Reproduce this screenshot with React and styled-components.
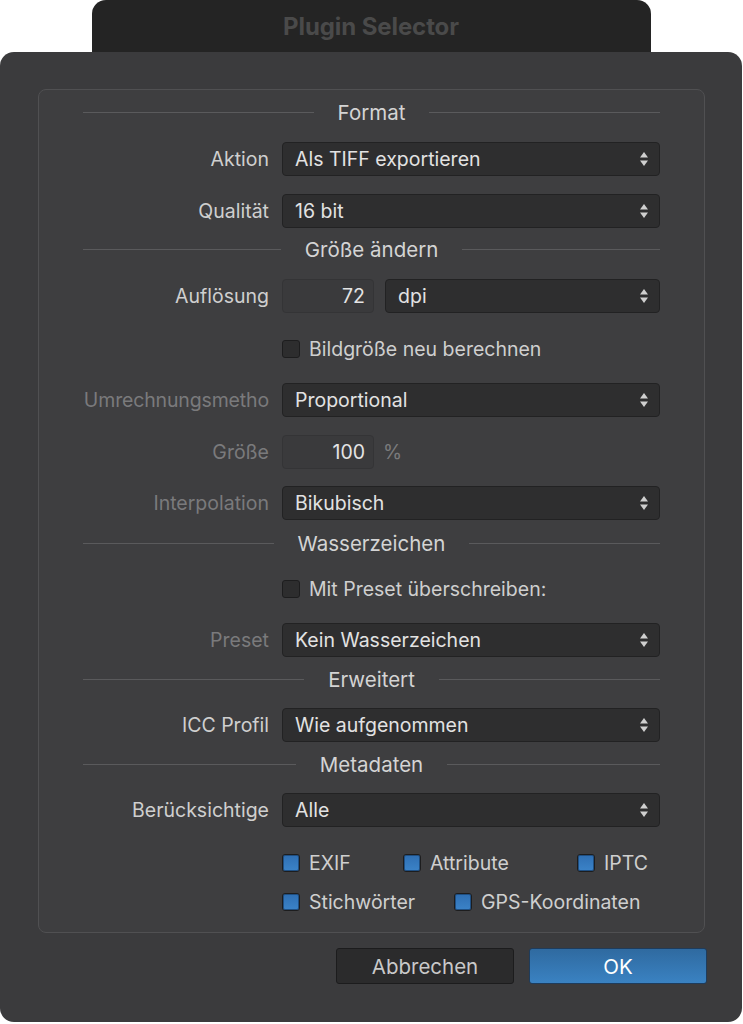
import React from 'react'
import styled, { createGlobalStyle, css } from 'styled-components'

const Global = createGlobalStyle`
  html, body {
    margin: 0;
    padding: 0;
    background: #ffffff;
    font-family: Inter, "Liberation Sans", sans-serif;
  }
`

const Stage = styled.div`
  width: 743px;
  height: 1024px;
  display: flex;
  flex-direction: column;
  align-items: center;
`

const TitleTab = styled.div`
  width: 559px;
  height: 52px;
  margin-left: -1px;
  background: #242424;
  border-radius: 14px 14px 0 0;
  display: flex;
  justify-content: center;
  align-items: center;
  h1 {
    margin: 0;
    font-size: 24px;
    font-weight: 700;
    color: #4a4a4a;
    letter-spacing: -0.1px;
  }
`

const Window = styled.div`
  width: 742px;
  align-self: flex-start;
  height: 970px;
  background: #3b3b3d;
  border-radius: 14px;
  padding: 37px 37px 0 38px;
  box-sizing: border-box;
  display: flex;
  flex-direction: column;
`

const Panel = styled.div`
  border: 1px solid #505052;
  border-radius: 8px;
  background: #3e3e40;
  padding: 10px 44px 18px 44px;
  display: flex;
  flex-direction: column;
`

const SectionHead = styled.div`
  height: 24px;
  margin-top: ${p => p.$mt || 0}px;
  display: flex;
  align-items: center;
  gap: 24px;
  font-size: 20.5px;
  color: #d4d4d4;
  &::before, &::after {
    content: '';
    flex: 1;
    height: 1px;
    background: #5a5a5c;
  }
`

const Row = styled.div`
  display: flex;
  align-items: center;
  gap: 13px;
  height: ${p => p.$h || 34}px;
  margin-top: ${p => p.$mt || 0}px;
`

const Label = styled.div`
  width: 186px;
  flex: none;
  white-space: nowrap;
  text-align: right;
  font-size: 19.5px;
  letter-spacing: ${p => (p.$tight ? '-0.15px' : 'normal')};
  color: ${p => (p.$disabled ? '#7a7a7c' : '#cfcfcf')};
`

const Select = styled.div`
  flex: 1;
  height: 34px;
  box-sizing: border-box;
  background: #2e2e2f;
  border: 1px solid #222223;
  border-radius: 4px;
  display: flex;
  align-items: center;
  padding: 0 10px 0 12px;
  font-size: 19.5px;
  color: #e2e2e2;
  span { flex: 1; }
`

const NumberField = styled.div`
  width: 92px;
  flex: none;
  height: 34px;
  box-sizing: border-box;
  border: 1px solid #343436;
  border-radius: 4px;
  background: #3a3a3c;
  display: flex;
  align-items: center;
  justify-content: flex-end;
  padding-right: 8px;
  margin-right: -2px;
  font-size: 19.5px;
  color: #e4e4e4;
`

const Unit = styled.span`
  font-size: 19.5px;
  color: #7a7a7c;
  margin-left: -2px;
`

const CheckGroup = styled.div`
  display: flex;
  align-items: center;
  width: ${p => (p.$w ? p.$w + 'px' : 'auto')};
  flex: none;
`

const Box = styled.div`
  width: 18px;
  height: 18px;
  box-sizing: border-box;
  border-radius: 3px;
  border: 1px solid #1d1d1e;
  margin-right: 9px;
  ${p =>
    p.$checked
      ? css`
          background: linear-gradient(#2f6fb3, #3b83c8);
          box-shadow: inset 0 0 0 1px #1f4f82;
        `
      : css`
          background: #2d2d2e;
        `}
`

const CheckText = styled.span`
  font-size: 19.5px;
  color: #cfcfcf;
`

const Spacer = styled.div`
  width: 186px;
  flex: none;
`

const Buttons = styled.div`
  display: flex;
  justify-content: flex-end;
  gap: 15px;
  margin-top: 15px;
  margin-right: -2px;
`

const Button = styled.div`
  width: 178px;
  height: 36px;
  box-sizing: border-box;
  border-radius: 3px;
  display: flex;
  align-items: center;
  justify-content: center;
  font-size: 20.5px;
  ${p =>
    p.$primary
      ? css`
          background: linear-gradient(#2f6aa0, #3a82c2);
          border: 1px solid #1e3c5c;
          color: #ffffff;
        `
      : css`
          background: #2b2b2c;
          border: 1px solid #1c1c1d;
          color: #c9c9c9;
        `}
`

const Stepper = () => (
  <svg width="10" height="16" viewBox="0 0 10 16">
    <path d="M5 1 L9 6.5 L1 6.5 Z" fill="#cfcfcf" />
    <path d="M5 15 L9 9.5 L1 9.5 Z" fill="#cfcfcf" />
  </svg>
)

const Dropdown = ({ value }) => (
  <Select>
    <span>{value}</span>
    <Stepper />
  </Select>
)

const Check = ({ checked, children, w }) => (
  <CheckGroup $w={w}>
    <Box $checked={checked} />
    <CheckText>{children}</CheckText>
  </CheckGroup>
)

export default function App() {
  return (
    <Stage>
      <Global />
      <TitleTab>
        <h1>Plugin Selector</h1>
      </TitleTab>
      <Window>
        <Panel>
          <SectionHead>Format</SectionHead>
          <Row $mt={18}>
            <Label>Aktion</Label>
            <Dropdown value="Als TIFF exportieren" />
          </Row>
          <Row $mt={18}>
            <Label>Qualität</Label>
            <Dropdown value="16 bit" />
          </Row>

          <SectionHead $mt={9}>Größe ändern</SectionHead>
          <Row $mt={18}>
            <Label>Auflösung</Label>
            <NumberField>72</NumberField>
            <Dropdown value="dpi" />
          </Row>
          <Row $mt={24} $h={24}>
            <Spacer />
            <Check>Bildgröße neu berechnen</Check>
          </Row>
          <Row $mt={22}>
            <Label $disabled $tight>Umrechnungsmetho</Label>
            <Dropdown value="Proportional" />
          </Row>
          <Row $mt={18}>
            <Label $disabled>Größe</Label>
            <NumberField>100</NumberField>
            <Unit>%</Unit>
          </Row>
          <Row $mt={17}>
            <Label $disabled>Interpolation</Label>
            <Dropdown value="Bikubisch" />
          </Row>

          <SectionHead $mt={11}>Wasserzeichen</SectionHead>
          <Row $mt={22} $h={24}>
            <Spacer />
            <Check>Mit Preset überschreiben:</Check>
          </Row>
          <Row $mt={22}>
            <Label $disabled>Preset</Label>
            <Dropdown value="Kein Wasserzeichen" />
          </Row>

          <SectionHead $mt={10}>Erweitert</SectionHead>
          <Row $mt={17}>
            <Label>ICC Profil</Label>
            <Dropdown value="Wie aufgenommen" />
          </Row>

          <SectionHead $mt={10}>Metadaten</SectionHead>
          <Row $mt={17}>
            <Label>Berücksichtige</Label>
            <Dropdown value="Alle" />
          </Row>
          <Row $mt={24} $h={24}>
            <Spacer />
            <Check checked w={108}>EXIF</Check>
            <Check checked w={161}>Attribute</Check>
            <Check checked>IPTC</Check>
          </Row>
          <Row $mt={15} $h={24}>
            <Spacer />
            <Check checked w={159}>Stichwörter</Check>
            <Check checked>GPS-Koordinaten</Check>
          </Row>
        </Panel>
        <Buttons>
          <Button>Abbrechen</Button>
          <Button $primary>OK</Button>
        </Buttons>
      </Window>
    </Stage>
  )
}
